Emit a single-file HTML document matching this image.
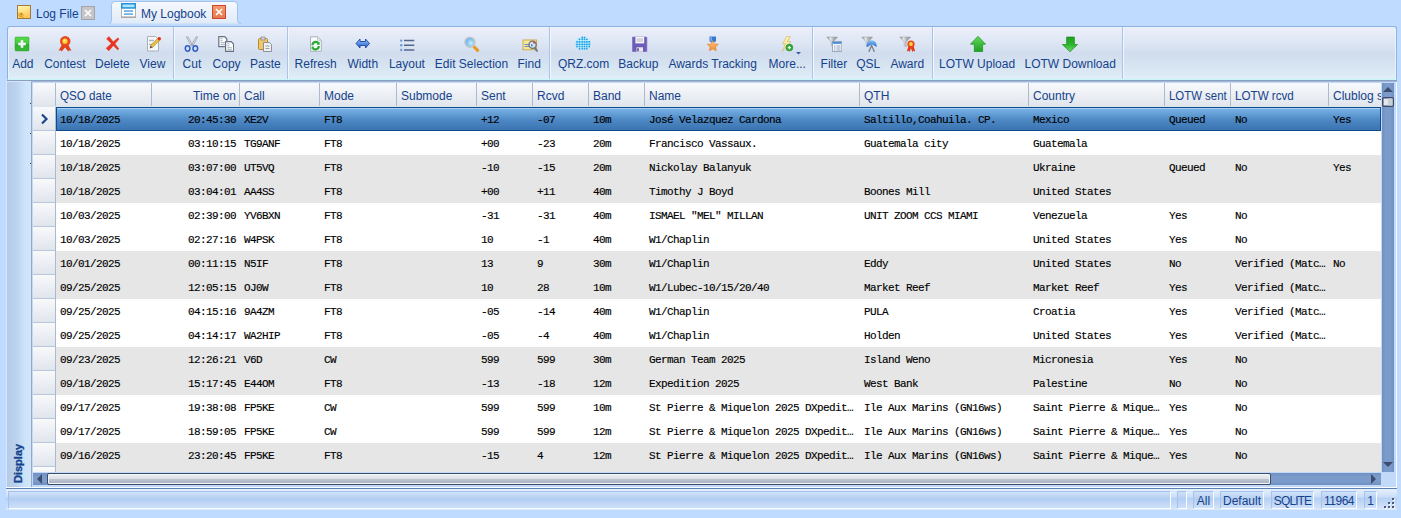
<!DOCTYPE html><html><head><meta charset="utf-8"><style>
*{margin:0;padding:0;box-sizing:border-box}
html,body{width:1401px;height:518px;overflow:hidden;background:#bfdbff;font-family:"Liberation Sans",sans-serif;}
.a{position:absolute}
.tx{position:absolute;font-size:12px;line-height:14px;color:#15428b;white-space:nowrap}
#tb{position:absolute;left:7px;top:26px;width:1390px;height:54px;border:1px solid #8db2e6;border-bottom:1px solid #c6f6fc;border-radius:3px 3px 0 0;
 background:linear-gradient(#eceffa 0%,#dfe7f4 28%,#d1ddee 50%,#d5e2f0 70%,#e0eef8 100%);box-shadow:inset 1px 0 0 #e4f4fc,inset -1px 0 0 #e4f6fc}
.sep{position:absolute;top:27px;width:1px;height:52px;background:#a9c4e8;box-shadow:1px 0 0 #f2f7fd}
.ic{position:absolute;top:36px;width:16px;height:16px}
#side{position:absolute;left:6px;top:81px;width:25px;height:407px;border:1px solid #d6e6f8;border-right:none;
 background:linear-gradient(90deg,#b4cae8 0%,#bcd3ee 40%,#cce4fa 75%,#d2e6f8 100%)}
.hd{position:absolute;top:83px;height:24px;background:linear-gradient(#f8fafc,#dfe4ec)}
.hs{position:absolute;top:83px;width:1px;height:23px;background:#aabbd0}
.ht{position:absolute;top:89px;font-size:12px;line-height:14px;color:#15428b;white-space:nowrap}
.rh{position:absolute;left:33px;width:23px;height:24px;background:linear-gradient(#f8f9fb,#e0e5ec);border-bottom:1px solid #b8c8da;border-right:1px solid #a8b9d0}
.row{position:absolute;left:56px;width:1325px;height:24px}
.c{position:absolute;font-family:"Liberation Mono",monospace;font-size:11px;letter-spacing:-0.6px;line-height:14px;color:#000;white-space:pre;-webkit-text-stroke:0.15px #000}
.stp{position:absolute;top:491px;height:18px;border:1px solid #a4c2ec;border-right-color:#f8fbff;border-bottom-color:#f8fbff;background:linear-gradient(#d0e2f9,#b2cdf2 45%,#c0d6f5 70%,#cde0f8);font-size:12px;line-height:17px;padding-top:1px;color:#15428b;text-align:center;white-space:nowrap}
#clip{position:absolute;left:33px;top:83px;width:1348px;height:389px;overflow:hidden}
#clip>*{margin-left:-33px;margin-top:-83px}
</style></head><body>
<svg class="a" style="left:17px;top:5px" width="14" height="14" viewBox="0 0 14 14"><defs><linearGradient id="lf" x1="0" y1="0" x2=".4" y2="1"><stop offset="0" stop-color="#fff6b8"/><stop offset=".5" stop-color="#ffe48a"/><stop offset="1" stop-color="#ffc45c"/></linearGradient></defs><rect x=".5" y=".5" width="13" height="13" fill="url(#lf)" stroke="#a27a3a"/><path d="M1.5 8 L6.5 13 M1.5 10 L4 12.5 M3 8.5 L4.5 8 L6.5 10.5" stroke="#e0a820" stroke-width="1.1"/></svg>
<div class="tx" style="left:36px;top:7px">Log File</div>
<div class="a" style="left:81px;top:6px;width:14px;height:14px;background:#c6c6c8;border:1px solid #a2a4a8"><svg width="12" height="12" viewBox="0 0 12 12" style="display:block"><path d="M3 3L9 9M9 3L3 9" stroke="#fff" stroke-width="1.6"/></svg></div>
<svg class="a" style="left:108px;top:0px" width="134" height="26" viewBox="0 0 134 26"><defs><linearGradient id="tg" x1="0" y1="0" x2="0" y2="1"><stop offset="0" stop-color="#f6f9fe"/><stop offset="1" stop-color="#e0eaf7"/></linearGradient></defs><path d="M1 23.5 Q3.5 23.5 3.5 20 V5 Q3.5 1.5 7 1.5 H126 Q129.5 1.5 129.5 5 V20 Q129.5 23.5 133 23.5" fill="url(#tg)" stroke="#a2c2ea"/></svg>
<svg class="a" style="left:121px;top:3px" width="15" height="15" viewBox="0 0 15 15"><rect x="0.5" y="4" width="14" height="10.5" fill="#fff" stroke="#b4b4b4"/><rect x="0" y="13.4" width="15" height="1.6" fill="#a8a8a8"/><rect x="0.75" y="0.75" width="13.5" height="4.2" fill="#a8e8fc" stroke="#2a8ed8" stroke-width="1.5"/><rect x="3" y="7.2" width="9" height="1.8" fill="#70b4e4"/><rect x="3" y="10.2" width="9" height="1.8" fill="#70b4e4"/></svg>
<div class="tx" style="left:141px;top:7px">My Logbook</div>
<div class="a" style="left:212px;top:5px;width:14px;height:14px;background:linear-gradient(#f09a70,#e47a50);border:1px solid #d2452c"><svg width="12" height="12" viewBox="0 0 12 12" style="display:block"><path d="M3 3L9 9M9 3L3 9" stroke="#fff" stroke-width="1.6"/></svg></div>
<div id="tb"></div>
<div class="a" style="left:7px;top:80px;width:1390px;height:1px;background:#8a9fc0"></div>
<div class="a" style="left:7px;top:81px;width:1390px;height:1px;background:#a2b8d8"></div>
<div class="sep" style="left:173px"></div>
<div class="sep" style="left:287px"></div>
<div class="sep" style="left:549px"></div>
<div class="sep" style="left:812px"></div>
<div class="sep" style="left:932px"></div>
<div class="sep" style="left:1122px"></div>
<svg class="ic" style="left:14px" viewBox="0 0 16 16"><defs><linearGradient id="ga" x1="0" y1="0" x2="0" y2="1"><stop offset="0" stop-color="#5ad84c"/><stop offset=".5" stop-color="#40cc3a"/><stop offset=".52" stop-color="#2eb02e"/><stop offset="1" stop-color="#38b836"/></linearGradient></defs><rect x="1" y="1" width="14" height="14" rx="1" fill="url(#ga)" stroke="#34a032" stroke-width=".5"/><path d="M8 4.2v7.6M4.2 8h7.6" stroke="#f6f2fc" stroke-width="2.6"/></svg>
<div class="tx" style="left:12.2px;top:57px">Add</div>
<svg class="ic" style="left:57px" viewBox="0 0 16 16"><path d="M5 8.5 L1.5 14.8 L3.6 14.2 L4.6 15.6 L8 11.5 L11.4 15.6 L12.4 14.2 L14.5 14.8 L11 8.5Z" fill="#e0401e"/><circle cx="8.2" cy="5.2" r="5.2" fill="#e8481c"/><circle cx="8" cy="5.2" r="2.6" fill="#ffd23c"/><circle cx="7.4" cy="4.6" r="1.1" fill="#fff09a"/></svg>
<div class="tx" style="left:44.2px;top:57px">Contest</div>
<svg class="ic" style="left:105px" viewBox="0 0 16 16"><path d="M3.99 0.63 L13.8 12.77 L12.6 13.83 L1.61 2.77Z M12.83 1.94 L13.97 3.06 L3.78 14.77 L1.22 12.23Z" fill="#e8361e" stroke="#e8361e" stroke-width=".7" stroke-linejoin="round"/></svg>
<div class="tx" style="left:95.0px;top:57px">Delete</div>
<svg class="ic" style="left:146px" viewBox="0 0 16 16"><path d="M1.5 0.5h8l3 3v11.5h-11z" fill="#f6f7f9" stroke="#a8b0b8"/><path d="M3 4.5h5M3 8.3h4" stroke="#a8b8cc" stroke-width="1.3"/><path d="M4.44 9.44 L6.56 11.56 L14.06 4.06 L11.94 1.94Z" fill="#e8c040" stroke="#9a7a20" stroke-width=".5"/><path d="M4.44 9.44 L6.56 11.56 L3.6 12.4Z" fill="#505050"/><circle cx="13.3" cy="2.8" r="1.7" fill="#e03020"/></svg>
<div class="tx" style="left:139.5px;top:57px">View</div>
<svg class="ic" style="left:184px" viewBox="0 0 16 16"><path d="M2.5 0.8 L3.8 0.8 L8.6 9 L7.2 10Z M12.3 0.8 L13.5 0.8 L8.8 10 L7.4 9Z" fill="#eceef2" stroke="#8a929c" stroke-width=".7"/><ellipse cx="3.6" cy="12.5" rx="2.3" ry="2.7" fill="none" stroke="#2c5ccc" stroke-width="1.5"/><ellipse cx="11.3" cy="12.5" rx="2.3" ry="2.7" fill="none" stroke="#2c5ccc" stroke-width="1.5"/></svg>
<div class="tx" style="left:182.6px;top:57px">Cut</div>
<svg class="ic" style="left:218px" viewBox="0 0 16 16"><path d="M0.8 0.6h5.8l2.2 2.2v7.8h-8z" fill="#fff" stroke="#687284" stroke-width="1.2"/><path d="M2.5 2.7h2M2.5 4.7h2M2.5 6.7h4.5M2.5 8.7h4.5" stroke="#8a94a4" stroke-width=".8"/><path d="M7.6 5.6h5.6l2.4 2.4v7.4h-8z" fill="#fff" stroke="#687284" stroke-width="1.2"/><path d="M9.3 7.8h2M9.3 9.8h2M9.3 11.8h4.6M9.3 13.8h4.6" stroke="#8a94a4" stroke-width=".8"/></svg>
<div class="tx" style="left:212.6px;top:57px">Copy</div>
<svg class="ic" style="left:257px" viewBox="0 0 16 16"><rect x="1.5" y="2.5" width="9" height="11" rx="1" fill="#f0c868" stroke="#b78a2c"/><rect x="4" y="1" width="4" height="3" fill="#d0d4d8" stroke="#808890" stroke-width=".7"/><path d="M6.5 6.5h6l2 2v7h-8z" fill="#eef0f2" stroke="#8a9098"/><path d="M8.5 10h4M8.5 12.5h4" stroke="#9aa0a8"/></svg>
<div class="tx" style="left:250.1px;top:57px">Paste</div>
<svg class="ic" style="left:308px" viewBox="0 0 16 16"><path d="M2.5 0.8h7.3l3.5 3.5v11h-10.8z" fill="#fafafa" stroke="#a8b0b8"/><path d="M9.5 0.8v3.5h3.5" fill="#e4e8ec" stroke="#a8b0b8" stroke-width=".6"/><path d="M4.4 9.2 A3.4 3.4 0 0 1 10.4 7.2 M10.8 10 A3.4 3.4 0 0 1 4.8 12.2" stroke="#2aa838" stroke-width="2.2" fill="none"/><path d="M11.6 5.6 L11.6 9 L8.6 8.6Z M3.6 13.6 L3.6 10.4 L6.6 10.8Z" fill="#2aa838"/></svg>
<div class="tx" style="left:294.6px;top:57px">Refresh</div>
<svg class="ic" style="left:355px" viewBox="0 0 16 16"><defs><linearGradient id="gw" x1="0" y1="0" x2="0" y2="1"><stop offset="0" stop-color="#a4c8f8"/><stop offset=".5" stop-color="#5a90e4"/><stop offset="1" stop-color="#2a5cc0"/></linearGradient></defs><path d="M1 7.5 L5 3 V5.5 H10.5 V3 L14.5 7.5 L10.5 12 V9.5 H5 V12Z" fill="url(#gw)" stroke="#1c46a4" stroke-width=".9" stroke-linejoin="round"/></svg>
<div class="tx" style="left:347.4px;top:57px">Width</div>
<svg class="ic" style="left:399px" viewBox="0 0 16 16"><circle cx="2.2" cy="4.6" r="1.2" fill="#6a9ad8"/><circle cx="2.2" cy="9.3" r="1.2" fill="#6a9ad8"/><circle cx="2.2" cy="14" r="1.2" fill="#6a9ad8"/><path d="M5 4.6h10.3M5 9.3h10.3M5 14h10.3" stroke="#56688a" stroke-width="1.5"/></svg>
<div class="tx" style="left:388.9px;top:57px">Layout</div>
<svg class="ic" style="left:464px" viewBox="0 0 16 16"><defs><radialGradient id="gs" cx=".6" cy=".6" r=".7"><stop offset="0" stop-color="#c8eefc"/><stop offset="1" stop-color="#4aa0e4"/></radialGradient></defs><path d="M9.6 10.4 L13.6 14.4" stroke="#e89a28" stroke-width="3" stroke-linecap="round"/><circle cx="5.9" cy="6.2" r="5" fill="url(#gs)" stroke="#c4c8cc" stroke-width="1.6"/></svg>
<div class="tx" style="left:434.8px;top:57px">Edit Selection</div>
<svg class="ic" style="left:522px" viewBox="0 0 16 16"><rect x="1" y="4" width="13.6" height="9.8" fill="#f8e898" stroke="#c8a840" stroke-width=".9"/><path d="M2.5 8.5h4.5M2.5 10.5h4.5" stroke="#5a7ac0" stroke-width=".9"/><path d="M12.6 11.6 L15 14.8" stroke="#707884" stroke-width="2" stroke-linecap="round"/><circle cx="10.6" cy="8.8" r="3.6" fill="#cfe4f8" stroke="#6a7280" stroke-width="1.3"/><path d="M9 8.5 Q10 7 11 9.5 Q10 11 9 10Z" fill="#5a8ad0"/><rect x="11.2" y="5.6" width="2" height="2" fill="#e04848"/></svg>
<div class="tx" style="left:517.5px;top:57px">Find</div>
<svg class="ic" style="left:575px" viewBox="0 0 16 16"><ellipse cx="8.1" cy="7.35" rx="7.9" ry="6.45" fill="#b8ecfa"/><path d="M0.6 8.4h15M1.2 5.9h13.8" stroke="#58c0f0" stroke-width=".7"/><rect x="6.45" y="0.65" width="1.5" height="1.5" fill="#1c9ce6"/><rect x="8.75" y="0.65" width="1.5" height="1.5" fill="#1c9ce6"/><rect x="3.75" y="2.55" width="1.5" height="1.5" fill="#1c9ce6"/><rect x="6.45" y="2.55" width="1.5" height="1.5" fill="#1c9ce6"/><rect x="8.75" y="2.55" width="1.5" height="1.5" fill="#1c9ce6"/><rect x="11.05" y="2.55" width="1.5" height="1.5" fill="#1c9ce6"/><rect x="1.25" y="5.15" width="1.5" height="1.5" fill="#1c9ce6"/><rect x="3.75" y="5.15" width="1.5" height="1.5" fill="#1c9ce6"/><rect x="6.45" y="5.15" width="1.5" height="1.5" fill="#1c9ce6"/><rect x="8.75" y="5.15" width="1.5" height="1.5" fill="#1c9ce6"/><rect x="11.05" y="5.15" width="1.5" height="1.5" fill="#1c9ce6"/><rect x="13.55" y="5.15" width="1.5" height="1.5" fill="#1c9ce6"/><rect x="1.25" y="7.65" width="1.5" height="1.5" fill="#1c9ce6"/><rect x="3.75" y="7.65" width="1.5" height="1.5" fill="#1c9ce6"/><rect x="6.45" y="7.65" width="1.5" height="1.5" fill="#1c9ce6"/><rect x="8.75" y="7.65" width="1.5" height="1.5" fill="#1c9ce6"/><rect x="11.05" y="7.65" width="1.5" height="1.5" fill="#1c9ce6"/><rect x="13.55" y="7.65" width="1.5" height="1.5" fill="#1c9ce6"/><rect x="1.25" y="9.85" width="1.5" height="1.5" fill="#1c9ce6"/><rect x="3.75" y="9.85" width="1.5" height="1.5" fill="#1c9ce6"/><rect x="6.45" y="9.85" width="1.5" height="1.5" fill="#1c9ce6"/><rect x="8.75" y="9.85" width="1.5" height="1.5" fill="#1c9ce6"/><rect x="11.05" y="9.85" width="1.5" height="1.5" fill="#1c9ce6"/><rect x="13.55" y="9.85" width="1.5" height="1.5" fill="#1c9ce6"/><rect x="3.75" y="12.05" width="1.5" height="1.5" fill="#1c9ce6"/><rect x="6.45" y="12.05" width="1.5" height="1.5" fill="#1c9ce6"/><rect x="8.75" y="12.05" width="1.5" height="1.5" fill="#1c9ce6"/><rect x="11.05" y="12.05" width="1.5" height="1.5" fill="#1c9ce6"/></svg>
<div class="tx" style="left:557.9px;top:57px">QRZ.com</div>
<svg class="ic" style="left:632px" viewBox="0 0 16 16"><rect x="0.3" y="1" width="14.6" height="14.7" rx=".6" fill="#6c5cb8" stroke="#8474c8" stroke-width=".6"/><rect x="3.4" y="1" width="8.8" height="6.4" fill="#f6f6f8"/><path d="M4.5 3h6.6M4.5 5h6.6" stroke="#a8a8b8" stroke-width=".9"/><rect x="4.5" y="11.3" width="6.5" height="4.4" fill="#e8e8ec"/><rect x="5.3" y="12.2" width="1.4" height="3" fill="#4a3a8a"/></svg>
<div class="tx" style="left:618.3px;top:57px">Backup</div>
<svg class="ic" style="left:705px" viewBox="0 0 16 16"><path d="M4.5 0.5h6.5v4.8l-3.25 1.8-3.25-1.8z" fill="#3a78d0"/><path d="M5.5 0.5h1.5v4.5h-1.5z" fill="#7ab0f0"/><defs><linearGradient id="gm" x1="0" y1="0" x2="0" y2="1"><stop offset="0" stop-color="#fcc880"/><stop offset="1" stop-color="#f08a34"/></linearGradient></defs><path d="M7.8 4.6 L9.5 7.9 L13.4 8.3 L10.5 10.9 L11.3 14.8 L7.8 12.9 L4.3 14.8 L5.1 10.9 L2.2 8.3 L6.1 7.9Z" fill="url(#gm)" stroke="#e08030" stroke-width=".6" stroke-linejoin="round"/></svg>
<div class="tx" style="left:668.4px;top:57px">Awards Tracking</div>
<svg class="ic" style="left:780px" viewBox="0 0 16 16"><path d="M6.8 0.3 L2.5 7.8 H5.6 L2.4 15.3 L10.8 5.6 H7.4 L10.4 0.3Z" fill="#faeeaa" stroke="#d8b050" stroke-width=".6"/><circle cx="9.4" cy="11.6" r="3.5" fill="#34a834" stroke="#2a902a" stroke-width=".5"/><path d="M9.4 10v3.2M7.8 11.6h3.2" stroke="#f0fff0" stroke-width="1.2"/></svg>
<div class="tx" style="left:768.6px;top:57px">More...</div>
<svg class="ic" style="left:826px" viewBox="0 0 16 16"><defs><linearGradient id="gf" x1="0" y1="0" x2="1" y2="0"><stop offset="0" stop-color="#7a7e84"/><stop offset=".35" stop-color="#e8eaec"/><stop offset=".6" stop-color="#b0b4b8"/><stop offset="1" stop-color="#8a8e94"/></linearGradient></defs><path d="M0.8 1 H11.6 L7.2 6 V11 L5.2 9.8 V6Z" fill="url(#gf)" stroke="#9a9ea4" stroke-width=".5"/><rect x="6.5" y="5.5" width="9.3" height="10" fill="#f4f8fc" stroke="#8a9ab0" stroke-width=".8"/><rect x="6.9" y="5.9" width="8.5" height="2" fill="#4a8ee0"/><path d="M8 10h1.5M10.5 10h4M8 12h1.5M10.5 12h4M8 14h1.5M10.5 14h4" stroke="#8a98b0" stroke-width=".9"/></svg>
<div class="tx" style="left:820.6px;top:57px">Filter</div>
<svg class="ic" style="left:861px" viewBox="0 0 16 16"><defs><linearGradient id="gf" x1="0" y1="0" x2="1" y2="0"><stop offset="0" stop-color="#7a7e84"/><stop offset=".35" stop-color="#e8eaec"/><stop offset=".6" stop-color="#b0b4b8"/><stop offset="1" stop-color="#8a8e94"/></linearGradient></defs><path d="M0.8 1 H11.6 L7.2 6 V11 L5.2 9.8 V6Z" fill="url(#gf)" stroke="#9a9ea4" stroke-width=".5"/><defs><linearGradient id="gq" x1="0" y1="0" x2="0" y2="1"><stop offset="0" stop-color="#8ac0f8"/><stop offset="1" stop-color="#2a70d8"/></linearGradient></defs><path d="M5.5 11 Q5.5 4.2 10.5 4.2 Q15.8 4.2 15.8 11 L11 8.5Z" fill="url(#gq)"/><path d="M7.8 15.8 L10.6 9.5 L13.4 15.8" stroke="#787c84" stroke-width="1.3" fill="none"/></svg>
<div class="tx" style="left:856.2px;top:57px">QSL</div>
<svg class="ic" style="left:899px" viewBox="0 0 16 16"><defs><linearGradient id="gf" x1="0" y1="0" x2="1" y2="0"><stop offset="0" stop-color="#7a7e84"/><stop offset=".35" stop-color="#e8eaec"/><stop offset=".6" stop-color="#b0b4b8"/><stop offset="1" stop-color="#8a8e94"/></linearGradient></defs><path d="M0.8 1 H11.6 L7.2 6 V11 L5.2 9.8 V6Z" fill="url(#gf)" stroke="#9a9ea4" stroke-width=".5"/><path d="M9.8 9 L7.8 15.5 L9.6 14.8 L10.6 16 L12 12.2 L13.4 16 L14.4 14.8 L16.2 15.5 L14.2 9Z" fill="#e03c1c"/><circle cx="12" cy="8.2" r="3.6" fill="#e8461c"/><circle cx="12" cy="8" r="1.9" fill="#ffd840"/></svg>
<div class="tx" style="left:890.4px;top:57px">Award</div>
<svg class="ic" style="left:970px" viewBox="0 0 16 16"><defs><linearGradient id="gu" x1="0" y1="0" x2="0" y2="1"><stop offset="0" stop-color="#64d860"/><stop offset="1" stop-color="#1ea01e"/></linearGradient></defs><path d="M8 0.3 L15.6 8.2 H12.6 V15.8 H4.3 V8.2 H0.4Z" fill="url(#gu)" stroke="#1a901c" stroke-width=".7" stroke-linejoin="round"/></svg>
<div class="tx" style="left:939.1px;top:57px">LOTW Upload</div>
<svg class="ic" style="left:1062px" viewBox="0 0 16 16"><defs><linearGradient id="gd" x1="0" y1="0" x2="0" y2="1"><stop offset="0" stop-color="#1ea01e"/><stop offset=".5" stop-color="#2cb42c"/><stop offset="1" stop-color="#6ad868"/></linearGradient></defs><path d="M8 15.8 L15.6 8.5 H12.4 V1 H4.6 V8.5 H0.4Z" fill="url(#gd)" stroke="#1a901c" stroke-width=".7" stroke-linejoin="round"/></svg>
<div class="tx" style="left:1024.5px;top:57px">LOTW Download</div>
<svg class="a" style="left:796px;top:52px" width="5" height="3"><path d="M0 0H5L2.5 2.5Z" fill="#3a5aa0"/></svg>
<div id="side"></div>
<div class="a" style="left:11px;top:483px;transform-origin:0 0;transform:rotate(-90deg);font-size:11px;font-weight:bold;line-height:14px;color:#15428b;-webkit-text-stroke:0.3px #15428b;white-space:nowrap">Display</div>
<div class="a" style="left:30px;top:103px;width:1px;height:1px;background:#404850"></div>
<div class="a" style="left:30px;top:133px;width:1px;height:1px;background:#404850"></div>
<div class="a" style="left:30px;top:163px;width:1px;height:1px;background:#404850"></div>
<div class="a" style="left:31px;top:82px;width:1366px;height:406px;background:#c2daf8;border-left:1px solid #93a8c8;border-right:1px solid #f8fcff;border-bottom:1px solid #f8fcff"></div>
<div id="clip">
<div class="hd" style="left:33px;width:23px"></div>
<div class="hd" style="left:55px;width:96px"></div>
<div class="hd" style="left:151px;width:88px"></div>
<div class="hd" style="left:239px;width:80px"></div>
<div class="hd" style="left:319px;width:77px"></div>
<div class="hd" style="left:396px;width:80px"></div>
<div class="hd" style="left:476px;width:56px"></div>
<div class="hd" style="left:532px;width:56px"></div>
<div class="hd" style="left:588px;width:56px"></div>
<div class="hd" style="left:644px;width:215px"></div>
<div class="hd" style="left:859px;width:169px"></div>
<div class="hd" style="left:1028px;width:136px"></div>
<div class="hd" style="left:1164px;width:66px"></div>
<div class="hd" style="left:1230px;width:98px"></div>
<div class="hd" style="left:1328px;width:92px"></div>
<div class="hs" style="left:151px"></div>
<div class="hs" style="left:239px"></div>
<div class="hs" style="left:319px"></div>
<div class="hs" style="left:396px"></div>
<div class="hs" style="left:476px"></div>
<div class="hs" style="left:532px"></div>
<div class="hs" style="left:588px"></div>
<div class="hs" style="left:644px"></div>
<div class="hs" style="left:859px"></div>
<div class="hs" style="left:1028px"></div>
<div class="hs" style="left:1164px"></div>
<div class="hs" style="left:1230px"></div>
<div class="hs" style="left:1328px"></div>
<div class="hs" style="left:1420px"></div>
<div class="hs" style="left:55px"></div>
<div class="ht" style="left:60px;transform:scaleX(0.97);transform-origin:0 0">QSO date</div>
<div class="ht" style="left:152px;width:84px;text-align:right">Time on</div>
<div class="ht" style="left:244px;transform:scaleX(1);transform-origin:0 0">Call</div>
<div class="ht" style="left:324px;transform:scaleX(1);transform-origin:0 0">Mode</div>
<div class="ht" style="left:401px;transform:scaleX(1);transform-origin:0 0">Submode</div>
<div class="ht" style="left:481px;transform:scaleX(1);transform-origin:0 0">Sent</div>
<div class="ht" style="left:537px;transform:scaleX(1);transform-origin:0 0">Rcvd</div>
<div class="ht" style="left:593px;transform:scaleX(1);transform-origin:0 0">Band</div>
<div class="ht" style="left:649px;transform:scaleX(1);transform-origin:0 0">Name</div>
<div class="ht" style="left:864px;transform:scaleX(1);transform-origin:0 0">QTH</div>
<div class="ht" style="left:1033px;transform:scaleX(1);transform-origin:0 0">Country</div>
<div class="ht" style="left:1169px;transform:scaleX(0.95);transform-origin:0 0">LOTW sent</div>
<div class="ht" style="left:1235px;transform:scaleX(0.97);transform-origin:0 0">LOTW rcvd</div>
<div class="ht" style="left:1333px;transform:scaleX(1);transform-origin:0 0">Clublog sent</div>
<div class="row" style="top:107px;background:linear-gradient(#7ab4e8,#4d88c4 55%,#3a74b2);border:1px solid #0d4a8e;box-shadow:inset 0 1px 0 #a8d0f4"></div>
<div class="rh" style="top:107px"></div>
<div class="c" style="top:113px;left:60px">10/18/2025</div>
<div class="c" style="top:113px;left:152px;width:84px;text-align:right">20:45:30</div>
<div class="c" style="top:113px;left:244px">XE2V</div>
<div class="c" style="top:113px;left:324px">FT8</div>
<div class="c" style="top:113px;left:481px">+12</div>
<div class="c" style="top:113px;left:537px">-07</div>
<div class="c" style="top:113px;left:593px">10m</div>
<div class="c" style="top:113px;left:649px">José Velazquez Cardona</div>
<div class="c" style="top:113px;left:864px">Saltillo,Coahuila. CP.</div>
<div class="c" style="top:113px;left:1033px">Mexico</div>
<div class="c" style="top:113px;left:1169px">Queued</div>
<div class="c" style="top:113px;left:1235px">No</div>
<div class="c" style="top:113px;left:1333px">Yes</div>
<div class="row" style="top:131px;background:#ffffff"></div>
<div class="rh" style="top:131px"></div>
<div class="c" style="top:137px;left:60px">10/18/2025</div>
<div class="c" style="top:137px;left:152px;width:84px;text-align:right">03:10:15</div>
<div class="c" style="top:137px;left:244px">TG9ANF</div>
<div class="c" style="top:137px;left:324px">FT8</div>
<div class="c" style="top:137px;left:481px">+00</div>
<div class="c" style="top:137px;left:537px">-23</div>
<div class="c" style="top:137px;left:593px">20m</div>
<div class="c" style="top:137px;left:649px">Francisco Vassaux.</div>
<div class="c" style="top:137px;left:864px">Guatemala city</div>
<div class="c" style="top:137px;left:1033px">Guatemala</div>
<div class="row" style="top:155px;background:#e6e6e6"></div>
<div class="rh" style="top:155px"></div>
<div class="c" style="top:161px;left:60px">10/18/2025</div>
<div class="c" style="top:161px;left:152px;width:84px;text-align:right">03:07:00</div>
<div class="c" style="top:161px;left:244px">UT5VQ</div>
<div class="c" style="top:161px;left:324px">FT8</div>
<div class="c" style="top:161px;left:481px">-10</div>
<div class="c" style="top:161px;left:537px">-15</div>
<div class="c" style="top:161px;left:593px">20m</div>
<div class="c" style="top:161px;left:649px">Nickolay Balanyuk</div>
<div class="c" style="top:161px;left:1033px">Ukraine</div>
<div class="c" style="top:161px;left:1169px">Queued</div>
<div class="c" style="top:161px;left:1235px">No</div>
<div class="c" style="top:161px;left:1333px">Yes</div>
<div class="row" style="top:179px;background:#e6e6e6"></div>
<div class="rh" style="top:179px"></div>
<div class="c" style="top:185px;left:60px">10/18/2025</div>
<div class="c" style="top:185px;left:152px;width:84px;text-align:right">03:04:01</div>
<div class="c" style="top:185px;left:244px">AA4SS</div>
<div class="c" style="top:185px;left:324px">FT8</div>
<div class="c" style="top:185px;left:481px">+00</div>
<div class="c" style="top:185px;left:537px">+11</div>
<div class="c" style="top:185px;left:593px">40m</div>
<div class="c" style="top:185px;left:649px">Timothy J Boyd</div>
<div class="c" style="top:185px;left:864px">Boones Mill</div>
<div class="c" style="top:185px;left:1033px">United States</div>
<div class="row" style="top:203px;background:#ffffff"></div>
<div class="rh" style="top:203px"></div>
<div class="c" style="top:209px;left:60px">10/03/2025</div>
<div class="c" style="top:209px;left:152px;width:84px;text-align:right">02:39:00</div>
<div class="c" style="top:209px;left:244px">YV6BXN</div>
<div class="c" style="top:209px;left:324px">FT8</div>
<div class="c" style="top:209px;left:481px">-31</div>
<div class="c" style="top:209px;left:537px">-31</div>
<div class="c" style="top:209px;left:593px">40m</div>
<div class="c" style="top:209px;left:649px">ISMAEL &quot;MEL&quot; MILLAN</div>
<div class="c" style="top:209px;left:864px">UNIT ZOOM CCS MIAMI</div>
<div class="c" style="top:209px;left:1033px">Venezuela</div>
<div class="c" style="top:209px;left:1169px">Yes</div>
<div class="c" style="top:209px;left:1235px">No</div>
<div class="row" style="top:227px;background:#ffffff"></div>
<div class="rh" style="top:227px"></div>
<div class="c" style="top:233px;left:60px">10/03/2025</div>
<div class="c" style="top:233px;left:152px;width:84px;text-align:right">02:27:16</div>
<div class="c" style="top:233px;left:244px">W4PSK</div>
<div class="c" style="top:233px;left:324px">FT8</div>
<div class="c" style="top:233px;left:481px">10</div>
<div class="c" style="top:233px;left:537px">-1</div>
<div class="c" style="top:233px;left:593px">40m</div>
<div class="c" style="top:233px;left:649px">W1/Chaplin</div>
<div class="c" style="top:233px;left:1033px">United States</div>
<div class="c" style="top:233px;left:1169px">Yes</div>
<div class="c" style="top:233px;left:1235px">No</div>
<div class="row" style="top:251px;background:#e6e6e6"></div>
<div class="rh" style="top:251px"></div>
<div class="c" style="top:257px;left:60px">10/01/2025</div>
<div class="c" style="top:257px;left:152px;width:84px;text-align:right">00:11:15</div>
<div class="c" style="top:257px;left:244px">N5IF</div>
<div class="c" style="top:257px;left:324px">FT8</div>
<div class="c" style="top:257px;left:481px">13</div>
<div class="c" style="top:257px;left:537px">9</div>
<div class="c" style="top:257px;left:593px">30m</div>
<div class="c" style="top:257px;left:649px">W1/Chaplin</div>
<div class="c" style="top:257px;left:864px">Eddy</div>
<div class="c" style="top:257px;left:1033px">United States</div>
<div class="c" style="top:257px;left:1169px">No</div>
<div class="c" style="top:257px;left:1235px">Verified (Matc…</div>
<div class="c" style="top:257px;left:1333px">No</div>
<div class="row" style="top:275px;background:#e6e6e6"></div>
<div class="rh" style="top:275px"></div>
<div class="c" style="top:281px;left:60px">09/25/2025</div>
<div class="c" style="top:281px;left:152px;width:84px;text-align:right">12:05:15</div>
<div class="c" style="top:281px;left:244px">OJ0W</div>
<div class="c" style="top:281px;left:324px">FT8</div>
<div class="c" style="top:281px;left:481px">10</div>
<div class="c" style="top:281px;left:537px">28</div>
<div class="c" style="top:281px;left:593px">10m</div>
<div class="c" style="top:281px;left:649px">W1/Lubec-10/15/20/40</div>
<div class="c" style="top:281px;left:864px">Market Reef</div>
<div class="c" style="top:281px;left:1033px">Market Reef</div>
<div class="c" style="top:281px;left:1169px">Yes</div>
<div class="c" style="top:281px;left:1235px">Verified (Matc…</div>
<div class="row" style="top:299px;background:#ffffff"></div>
<div class="rh" style="top:299px"></div>
<div class="c" style="top:305px;left:60px">09/25/2025</div>
<div class="c" style="top:305px;left:152px;width:84px;text-align:right">04:15:16</div>
<div class="c" style="top:305px;left:244px">9A4ZM</div>
<div class="c" style="top:305px;left:324px">FT8</div>
<div class="c" style="top:305px;left:481px">-05</div>
<div class="c" style="top:305px;left:537px">-14</div>
<div class="c" style="top:305px;left:593px">40m</div>
<div class="c" style="top:305px;left:649px">W1/Chaplin</div>
<div class="c" style="top:305px;left:864px">PULA</div>
<div class="c" style="top:305px;left:1033px">Croatia</div>
<div class="c" style="top:305px;left:1169px">Yes</div>
<div class="c" style="top:305px;left:1235px">Verified (Matc…</div>
<div class="row" style="top:323px;background:#ffffff"></div>
<div class="rh" style="top:323px"></div>
<div class="c" style="top:329px;left:60px">09/25/2025</div>
<div class="c" style="top:329px;left:152px;width:84px;text-align:right">04:14:17</div>
<div class="c" style="top:329px;left:244px">WA2HIP</div>
<div class="c" style="top:329px;left:324px">FT8</div>
<div class="c" style="top:329px;left:481px">-05</div>
<div class="c" style="top:329px;left:537px">-4</div>
<div class="c" style="top:329px;left:593px">40m</div>
<div class="c" style="top:329px;left:649px">W1/Chaplin</div>
<div class="c" style="top:329px;left:864px">Holden</div>
<div class="c" style="top:329px;left:1033px">United States</div>
<div class="c" style="top:329px;left:1169px">Yes</div>
<div class="c" style="top:329px;left:1235px">Verified (Matc…</div>
<div class="row" style="top:347px;background:#e6e6e6"></div>
<div class="rh" style="top:347px"></div>
<div class="c" style="top:353px;left:60px">09/23/2025</div>
<div class="c" style="top:353px;left:152px;width:84px;text-align:right">12:26:21</div>
<div class="c" style="top:353px;left:244px">V6D</div>
<div class="c" style="top:353px;left:324px">CW</div>
<div class="c" style="top:353px;left:481px">599</div>
<div class="c" style="top:353px;left:537px">599</div>
<div class="c" style="top:353px;left:593px">30m</div>
<div class="c" style="top:353px;left:649px">German Team 2025</div>
<div class="c" style="top:353px;left:864px">Island Weno</div>
<div class="c" style="top:353px;left:1033px">Micronesia</div>
<div class="c" style="top:353px;left:1169px">Yes</div>
<div class="c" style="top:353px;left:1235px">No</div>
<div class="row" style="top:371px;background:#e6e6e6"></div>
<div class="rh" style="top:371px"></div>
<div class="c" style="top:377px;left:60px">09/18/2025</div>
<div class="c" style="top:377px;left:152px;width:84px;text-align:right">15:17:45</div>
<div class="c" style="top:377px;left:244px">E44OM</div>
<div class="c" style="top:377px;left:324px">FT8</div>
<div class="c" style="top:377px;left:481px">-13</div>
<div class="c" style="top:377px;left:537px">-18</div>
<div class="c" style="top:377px;left:593px">12m</div>
<div class="c" style="top:377px;left:649px">Expedition 2025</div>
<div class="c" style="top:377px;left:864px">West Bank</div>
<div class="c" style="top:377px;left:1033px">Palestine</div>
<div class="c" style="top:377px;left:1169px">No</div>
<div class="c" style="top:377px;left:1235px">No</div>
<div class="row" style="top:395px;background:#ffffff"></div>
<div class="rh" style="top:395px"></div>
<div class="c" style="top:401px;left:60px">09/17/2025</div>
<div class="c" style="top:401px;left:152px;width:84px;text-align:right">19:38:08</div>
<div class="c" style="top:401px;left:244px">FP5KE</div>
<div class="c" style="top:401px;left:324px">CW</div>
<div class="c" style="top:401px;left:481px">599</div>
<div class="c" style="top:401px;left:537px">599</div>
<div class="c" style="top:401px;left:593px">10m</div>
<div class="c" style="top:401px;left:649px">St Pierre &amp; Miquelon 2025 DXpedit…</div>
<div class="c" style="top:401px;left:864px">Ile Aux Marins (GN16ws)</div>
<div class="c" style="top:401px;left:1033px">Saint Pierre &amp; Mique…</div>
<div class="c" style="top:401px;left:1169px">Yes</div>
<div class="c" style="top:401px;left:1235px">No</div>
<div class="row" style="top:419px;background:#ffffff"></div>
<div class="rh" style="top:419px"></div>
<div class="c" style="top:425px;left:60px">09/17/2025</div>
<div class="c" style="top:425px;left:152px;width:84px;text-align:right">18:59:05</div>
<div class="c" style="top:425px;left:244px">FP5KE</div>
<div class="c" style="top:425px;left:324px">CW</div>
<div class="c" style="top:425px;left:481px">599</div>
<div class="c" style="top:425px;left:537px">599</div>
<div class="c" style="top:425px;left:593px">12m</div>
<div class="c" style="top:425px;left:649px">St Pierre &amp; Miquelon 2025 DXpedit…</div>
<div class="c" style="top:425px;left:864px">Ile Aux Marins (GN16ws)</div>
<div class="c" style="top:425px;left:1033px">Saint Pierre &amp; Mique…</div>
<div class="c" style="top:425px;left:1169px">Yes</div>
<div class="c" style="top:425px;left:1235px">No</div>
<div class="row" style="top:443px;background:#e6e6e6"></div>
<div class="rh" style="top:443px"></div>
<div class="c" style="top:449px;left:60px">09/16/2025</div>
<div class="c" style="top:449px;left:152px;width:84px;text-align:right">23:20:45</div>
<div class="c" style="top:449px;left:244px">FP5KE</div>
<div class="c" style="top:449px;left:324px">FT8</div>
<div class="c" style="top:449px;left:481px">-15</div>
<div class="c" style="top:449px;left:537px">4</div>
<div class="c" style="top:449px;left:593px">12m</div>
<div class="c" style="top:449px;left:649px">St Pierre &amp; Miquelon 2025 DXpedit…</div>
<div class="c" style="top:449px;left:864px">Ile Aux Marins (GN16ws)</div>
<div class="c" style="top:449px;left:1033px">Saint Pierre &amp; Mique…</div>
<div class="c" style="top:449px;left:1169px">Yes</div>
<div class="c" style="top:449px;left:1235px">No</div>
<div class="rh" style="top:467px;height:6px;border-bottom:none;background:linear-gradient(#fbfcfd,#f0f3f7)"></div>
<div class="a" style="left:56px;top:467px;width:1325px;height:6px;background:#e6e6e6"></div>
</div>
<svg class="a" style="left:40px;top:113px" width="9" height="12" viewBox="0 0 9 12"><path d="M2 1.5 L6.5 6 L2 10.5" stroke="#1d4690" stroke-width="2.2" fill="none"/></svg>
<div class="a" style="left:1382px;top:83px;width:12px;height:389px;background:linear-gradient(90deg,#7090c2,#7b9bcb 30%,#7b9bcb 70%,#7090c2)"></div>
<svg class="a" style="left:1382px;top:83px" width="12" height="389"><path d="M1 9 L6 4 L11 9Z" fill="#3e4c70"/><rect x="0.75" y="14.75" width="10.5" height="8.5" rx="1" fill="#e4e7ec" stroke="#3e4c6a" stroke-width="1.5"/><rect x="6" y="15.5" width="4.5" height="7" fill="#c8d0da"/><path d="M1 379 L6 384 L11 379Z" fill="#3e4c70"/></svg>
<div class="a" style="left:33px;top:473px;width:1348px;height:12px;background:linear-gradient(#7090c2,#7b9bcb 30%,#7b9bcb 70%,#7090c2)"></div>
<div class="a" style="left:47px;top:473px;width:1224px;height:12px;border:1px solid #3c4a6c;border-radius:2px;background:linear-gradient(#eceef2,#dde1e6 48%,#bcc4d0 52%,#a8b2c2);box-shadow:inset 0 0 0 1px #f4f6f8"></div>
<svg class="a" style="left:33px;top:473px" width="1348" height="12"><path d="M9 1 L4 6 L9 11Z" fill="#3e4c70"/><path d="M1338 1 L1343 6 L1338 11Z" fill="#3e4c70"/></svg>
<div class="a" style="left:6px;top:487px;width:1391px;height:1px;background:#f8fcff"></div>
<div class="a" style="left:6px;top:488px;width:1391px;height:1px;background:#5a80b4"></div>
<div class="a" style="left:6px;top:489px;width:1391px;height:21px;background:linear-gradient(#e6f0fd,#cde0f8 35%,#b6d1f4 45%,#c4daf6 70%,#d6e6f9 95%,#e0ecfb)"></div>
<div class="stp" style="left:8px;width:1163px"></div>
<div class="stp" style="left:1177px;width:10px"></div>
<div class="stp" style="left:1193px;width:21px">All</div>
<div class="stp" style="left:1220px;width:44px">Default</div>
<div class="stp" style="left:1271px;width:43px"><span style="letter-spacing:-0.9px">SQLITE</span></div>
<div class="stp" style="left:1321px;width:36px"><span style="letter-spacing:-0.5px">11964</span></div>
<div class="stp" style="left:1364px;width:13px">1</div>
<svg class="a" style="left:1383px;top:497px" width="13" height="13"><g fill="#f4f8fc"><rect x="10" y="2" width="2" height="2"/><rect x="6" y="6" width="2" height="2"/><rect x="10" y="6" width="2" height="2"/><rect x="2" y="10" width="2" height="2"/><rect x="6" y="10" width="2" height="2"/><rect x="10" y="10" width="2" height="2"/></g><g fill="#4a5a7a"><rect x="9" y="1" width="2" height="2"/><rect x="5" y="5" width="2" height="2"/><rect x="9" y="5" width="2" height="2"/><rect x="1" y="9" width="2" height="2"/><rect x="5" y="9" width="2" height="2"/><rect x="9" y="9" width="2" height="2"/></g></svg>
</body></html>
